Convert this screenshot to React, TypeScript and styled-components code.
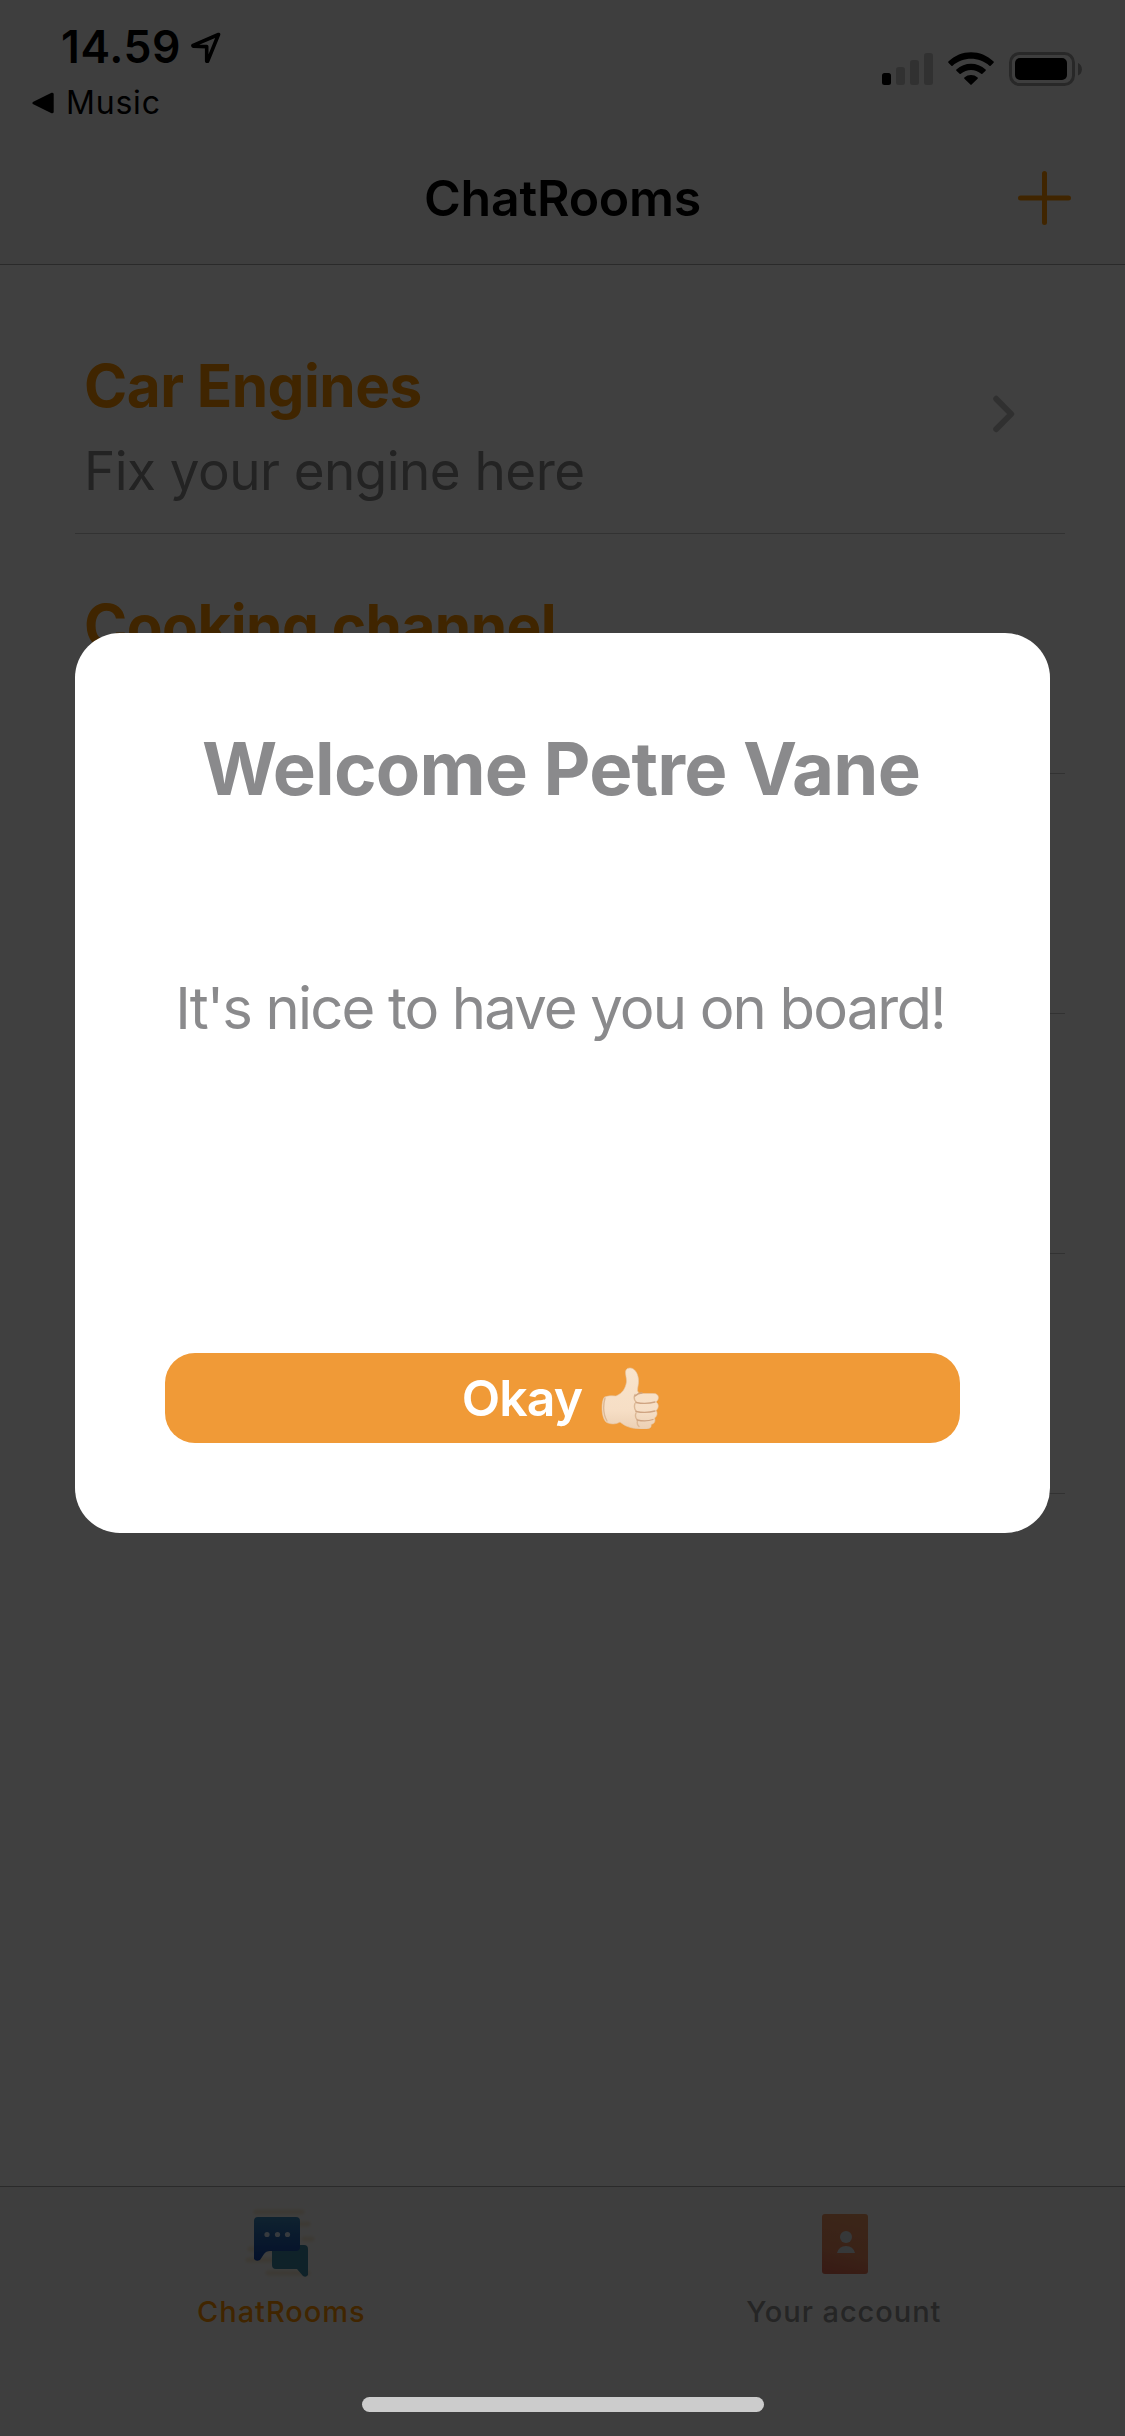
import React from "react";
import styled, { createGlobalStyle } from "styled-components";

const GlobalStyle = createGlobalStyle`
  *, *::before, *::after { box-sizing: border-box; }
  body { margin: 0; background: #fff; }
  h1, h2, p { margin: 0; }
`;

const Screen = styled.div`
  position: relative;
  display: flex;
  flex-direction: column;
  width: 1125px;
  height: 2436px;
  overflow: hidden;
  background: #fff;
  font-family: Inter, "Liberation Sans", sans-serif;
  color: #000;
`;

const Header = styled.header`
  display: flex;
  flex-direction: column;
  height: 265px;
  background: #f7f7f7;
  border-bottom: 1px solid #a8a8a8;
`;

const StatusBar = styled.div`
  display: flex;
  justify-content: space-between;
  height: 132px;
  padding: 20px 42px 0 32px;
`;

const StatusLeft = styled.div`
  display: flex;
  flex-direction: column;
`;

const TimeRow = styled.div`
  display: flex;
  align-items: center;
  gap: 12px;
  height: 54px;
  padding-left: 29px;
`;

const Time = styled.span`
  width: 118px;
  font-size: 44.5px;
  line-height: 54px;
  font-weight: 600;
  letter-spacing: 0.6px;
  white-space: nowrap;
`;

const BackRow = styled.div`
  display: flex;
  align-items: center;
  gap: 11px;
  height: 57px;
`;

const BackLabel = styled.span`
  padding-top: 1px;
  font-size: 32px;
  line-height: 40px;
  font-weight: 400;
  letter-spacing: 0.8px;
`;

const StatusIcons = styled.div`
  display: flex;
  align-items: flex-start;
  gap: 15px;
  padding-top: 32px;
`;

const NavBar = styled.div`
  display: grid;
  grid-template-columns: 1fr auto 1fr;
  align-items: center;
  height: 132px;
  padding-right: 54px;
  padding-left: 54px;
`;

const NavTitle = styled.h1`
  grid-column: 2;
  font-size: 50px;
  line-height: 60px;
  font-weight: 600;
  letter-spacing: -0.25px;
`;

const AddButton = styled.button`
  display: flex;
  justify-self: end;
  padding: 0;
  border: 0;
  background: none;
`;

const RoomList = styled.main`
  display: flex;
  flex: 1;
  flex-direction: column;
  padding: 29px 60px 0 75px;
`;

const Room = styled.div`
  display: flex;
  align-items: center;
  justify-content: space-between;
  height: 240px;
  padding: 0 50px 0 9px;
  border-bottom: 1px solid #c8c8c8;
`;

const RoomText = styled.div`
  display: flex;
  flex-direction: column;
  gap: 15px;
  padding-top: 29px;
`;

const RoomName = styled.h2`
  font-size: 58.5px;
  line-height: 70px;
  font-weight: 700;
  letter-spacing: -0.55px;
  color: #ff9500;
`;

const RoomTopic = styled.p`
  font-size: 53px;
  line-height: 70px;
  letter-spacing: -0.55px;
  color: #8a8a8a;
`;

const TabBar = styled.nav`
  display: grid;
  grid-template-columns: 1fr 1fr;
  height: 250px;
  padding-top: 16px;
  background: #f8f8f8;
  border-top: 1px solid #a8a8a8;
`;

const Tab = styled.div<{ $active?: boolean }>`
  display: flex;
  flex-direction: column;
  align-items: center;
  gap: 11px;
  color: ${(p) => (p.$active ? "#ff9500" : "#929292")};
`;

const TabLabel = styled.span`
  font-size: 29px;
  line-height: 36px;
  font-weight: 500;
  letter-spacing: 0.95px;
`;

const Backdrop = styled.div`
  position: absolute;
  inset: 0;
  display: flex;
  flex-direction: column;
  align-items: center;
  padding-top: 633px;
  background: rgba(0, 0, 0, 0.75);
`;

const Dialog = styled.section`
  display: flex;
  flex-direction: column;
  align-items: center;
  width: 975px;
  height: 900px;
  padding: 91px 90px 90px;
  border-radius: 45px;
  background: #fff;
  color: #8a8a8c;
`;

const DialogTitle = styled.h2`
  padding-right: 3px;
  font-size: 72.5px;
  line-height: 90px;
  font-weight: 700;
  letter-spacing: -0.8px;
  white-space: nowrap;
`;

const DialogText = styled.p`
  margin-top: 149px;
  padding-right: 5px;
  font-size: 58px;
  line-height: 90px;
  letter-spacing: -1.85px;
  white-space: nowrap;
`;

const OkayButton = styled.button`
  display: flex;
  align-items: center;
  justify-content: center;
  gap: 19px;
  width: 795px;
  height: 90px;
  margin-top: auto;
  padding: 0 3px 0 0;
  border: 0;
  border-radius: 30px;
  background: #f09a37;
  color: #fff;
  font: 600 50px/60px Inter, "Liberation Sans", sans-serif;
  letter-spacing: -0.9px;
`;

const HomeIndicator = styled.div`
  position: absolute;
  bottom: 24px;
  left: 362px;
  width: 402px;
  height: 15px;
  border-radius: 8px;
  background: #ccc;
`;

const LocationIcon = () => (
  <svg width="30" height="32" viewBox="0 0 30 32" fill="none">
    <path d="M27.5 3.500 2.200 14.300c-.5.3-.3.8.2.9l13.300.4v14.300c0 .6.8.7 1 .2L27.500 3.500Z" stroke="#000" strokeWidth="3.6" strokeLinejoin="round" />
  </svg>
);

const BackTriangle = () => (
  <svg width="23" height="22" viewBox="0 0 23 22">
    <path d="M2 11 20.200 2.200v17.600L2 11Z" stroke="#000" strokeWidth="3" strokeLinejoin="round" />
  </svg>
);

const SignalIcon = () => (
  <svg width="51" height="34" viewBox="0 0 51 34">
    <rect x="0" y="21" width="9" height="12" rx="2.5" fill="#000" />
    <rect x="14" y="15" width="9" height="18" rx="2.5" fill="#c4c4c4" />
    <rect x="28" y="8" width="9" height="25" rx="2.5" fill="#c4c4c4" />
    <rect x="42" y="1" width="9" height="32" rx="2.5" fill="#c4c4c4" />
  </svg>
);

const WifiIcon = () => (
  <svg width="46" height="34" viewBox="0 0 46 34">
    <path d="M0.4 9.500C13 -3 33 -3 45.600 9.500q.5.6 0 1.200l-3 3q-.6.6-1.200 0C31 4.500 15 4.500 4.600 13.700q-.6.6-1.200 0l-3-3q-.5-.6 0-1.200Z" />
    <path d="M8.400 17.500c8.200-7.700 21-7.700 29.200 0q.6.6 0 1.200l-3.200 3.100q-.6.6-1.200 0c-5.800-5.200-14.600-5.200-20.400 0q-.6.6-1.200 0l-3.200-3.100q-.6-.6 0-1.200Z" />
    <path d="M16.400 25.500c3.800-3.300 9.400-3.300 13.200 0q.7.6 0 1.200l-6 5.900q-.6.6-1.200 0l-6-5.900q-.7-.6 0-1.200Z" />
  </svg>
);

const BatteryIcon = () => (
  <svg width="74" height="34" viewBox="0 0 74 34">
    <rect x="1.5" y="1.5" width="63" height="31" rx="9" fill="none" stroke="#a0a0a0" strokeWidth="3" />
    <rect x="6" y="6" width="52" height="22" rx="5" fill="#000" />
    <path d="M69 11c5.200 1.500 5.200 11 0 12.500Z" fill="#a0a0a0" />
  </svg>
);

const PlusIcon = () => (
  <svg width="53" height="54" viewBox="0 0 53 54">
    <path d="M2.500 27h48M26.500 2.500v49" stroke="#ff9500" strokeWidth="5" strokeLinecap="round" />
  </svg>
);

const Chevron = () => (
  <svg width="22" height="38" viewBox="0 0 22 38" fill="none">
    <path d="m3.200 3.800 15 15.200-15 15.200" stroke="#c0c0c0" strokeWidth="6" strokeLinecap="round" strokeLinejoin="round" />
  </svg>
);

const ChatIcon = () => (
  <svg width="75" height="80" viewBox="0 0 75 80">
    <defs>
      <linearGradient id="bubble" x1="0" y1="0" x2="0" y2="1">
        <stop offset="0" stopColor="#3c88bc" />
        <stop offset="1" stopColor="#1040a8" />
      </linearGradient>
      <filter id="soft" x="-20%" y="-20%" width="140%" height="140%">
        <feGaussianBlur stdDeviation="1.5" />
      </filter>
      <filter id="edge"><feGaussianBlur stdDeviation="0.7" /></filter>
    </defs>
    <path
      d="M12 9h46M52 21h12M60 36h8M6 46h24M4 57h30M24 70h40"
      stroke="#e8cc94"
      strokeWidth="5.5"
      strokeLinecap="round"
      opacity=".4"
      filter="url(#soft)"
    />
    <g filter="url(#edge)">
      <path d="M28 42h32q4 0 4 4v26q-2 3-5 1l-6-7H32q-4 0-4-4V42Z" fill="#3c88a4" />
      <path d="M14 14h38q4 0 4 4v26q0 4-4 4H26q-4 0-6 3l-4 6q-4 2-6-1V18q0-4 4-4Z" fill="url(#bubble)" />
      <circle cx="23" cy="31.5" r="2.6" fill="#d6e6f5" />
      <circle cx="33.5" cy="31.5" r="2.6" fill="#d6e6f5" />
      <circle cx="43.5" cy="31.5" r="2.6" fill="#d6e6f5" />
    </g>
  </svg>
);

const AccountIcon = () => (
  <svg width="75" height="80" viewBox="0 0 75 80">
    <defs>
      <linearGradient id="book" x1="0.6" y1="0" x2="0.4" y2="1">
        <stop offset="0" stopColor="#ec9660" />
        <stop offset=".65" stopColor="#e6865c" />
        <stop offset="1" stopColor="#dc6c54" />
      </linearGradient>
      <filter id="bookEdge"><feGaussianBlur stdDeviation="0.6" /></filter>
    </defs>
    <g filter="url(#bookEdge)">
      <rect x="16" y="11" width="46" height="60" rx="3" fill="url(#book)" />
      <circle cx="40" cy="34" r="6" fill="#d8e0e4" />
      <path d="M31 50q2-7 9-7t9 7Z" fill="#d8e0e4" />
    </g>
  </svg>
);

const ThumbsUp = () => (
  <svg width="59" height="62" viewBox="0 0 59 62">
    <defs>
      <linearGradient id="skin" x1="0" y1="0" x2="0" y2="1">
        <stop offset="0" stopColor="#f9e4cc" />
        <stop offset=".7" stopColor="#f6dec5" />
        <stop offset="1" stopColor="#ecd0b4" />
      </linearGradient>
    </defs>
    <path
      d="M3.500 30q5-2 11.500-1c7-3 9.500-8 10.500-14 .5-5-3-11 1-13.500 5-2 9 2 10.500 8 1.500 6-.5 10-.5 14q1 4 4 3h12c6 0 6 6 2.500 8.500 3.500 2 2.500 7 0 8.500 2 2.500 1 6-1.500 7.500 1.500 4-1 6-3.500 6.500 1 4-3 4.500-7 4.500-9 0-17-1-24-7-5 3-11 2-14 0C0 50 0 34 3.500 30Z"
      fill="url(#skin)"
      stroke="#e6c8a8"
      strokeWidth=".6"
    />
    <path d="M4 31q-3.500 13 2 23M34 27.500q-2 4 1 7.500M34 36.500q-1.500 4 1 7.500M35 46q-1.500 4 1 6.500M36.500 54q-1 3 1.500 5.500" stroke="#dcb895" strokeWidth="1.4" fill="none" strokeLinecap="round" />
    <path d="M35 35.500q10 2 19-.5M35 44.500q10 2 19-.5M36 53q9 2 16-.5M34 29q3-3 7-3" stroke="#cfa482" strokeWidth="1.3" fill="none" strokeLinecap="round" />
  </svg>
);

interface RoomEntry {
  name?: string;
  topic?: string;
}

const rooms: RoomEntry[] = [
  { name: "Car Engines", topic: "Fix your engine here" },
  { name: "Cooking channel" },
  {},
  {},
  {},
];

export default function App() {
  return (
    <>
      <GlobalStyle />
      <Screen>
        <Header>
          <StatusBar>
            <StatusLeft>
              <TimeRow>
                <Time>14.59</Time>
                <LocationIcon />
              </TimeRow>
              <BackRow>
                <BackTriangle />
                <BackLabel>Music</BackLabel>
              </BackRow>
            </StatusLeft>
            <StatusIcons>
              <SignalIcon />
              <WifiIcon />
              <BatteryIcon />
            </StatusIcons>
          </StatusBar>
          <NavBar>
            <NavTitle>ChatRooms</NavTitle>
            <AddButton aria-label="Add room"><PlusIcon /></AddButton>
          </NavBar>
        </Header>
        <RoomList>
          {rooms.map((room, i) => (
            <Room key={i}>
              {room.name && (
                <RoomText>
                  <RoomName>{room.name}</RoomName>
                  <RoomTopic>{room.topic ?? "\u00a0"}</RoomTopic>
                </RoomText>
              )}
              {room.name && <Chevron />}
            </Room>
          ))}
        </RoomList>
        <TabBar>
          <Tab $active>
            <ChatIcon />
            <TabLabel>ChatRooms</TabLabel>
          </Tab>
          <Tab>
            <AccountIcon />
            <TabLabel>Your account</TabLabel>
          </Tab>
        </TabBar>
        <Backdrop>
          <Dialog role="dialog">
            <DialogTitle>Welcome Petre Vane</DialogTitle>
            <DialogText>It's nice to have you on board!</DialogText>
            <OkayButton>
              Okay
              <ThumbsUp />
            </OkayButton>
          </Dialog>
        </Backdrop>
        <HomeIndicator />
      </Screen>
    </>
  );
}
